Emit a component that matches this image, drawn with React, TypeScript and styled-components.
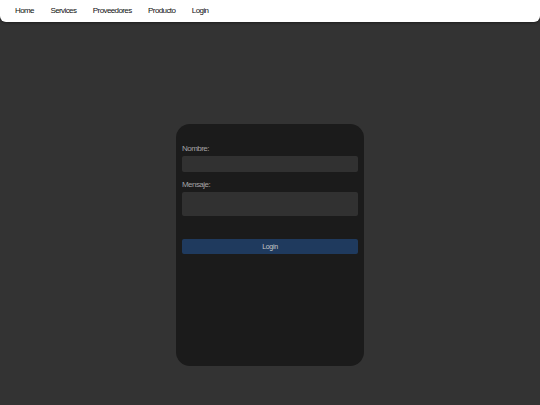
import styled, { createGlobalStyle } from 'styled-components'

const GlobalStyle = createGlobalStyle`
    html, body {
        margin: 0;
        padding: 0;
        background-color: #333333;
        font-family: "Liberation Sans", Arial, sans-serif;
    }
    * {
        box-sizing: border-box;
    }
`

const Page = styled.div`
    min-height: 405px;
    background-color: #333333;
    overflow: hidden;
`

const Nav = styled.nav`
    height: 22px;
    background-color: #ffffff;
    border-radius: 0 0 6px 6px;
    box-shadow: 0 1px 3px rgba(0, 0, 0, 0.4);
    display: flex;
    align-items: center;
    padding: 0 0 2px 15px;
    gap: 16.5px;
`

const NavLink = styled.a`
    font-size: 8px;
    letter-spacing: -0.6px;
    color: #111111;
    text-decoration: none;
    cursor: pointer;
`

const Main = styled.main`
    display: flex;
    justify-content: center;
    padding-top: 102px;
`

const Card = styled.form`
    width: 188px;
    height: 242px;
    background-color: #1b1b1b;
    border-radius: 14px;
    padding: 20px 6px 0;
    display: flex;
    flex-direction: column;
`

const Label = styled.label`
    font-size: 8px;
    letter-spacing: -0.55px;
    color: #a4a4a4;
    margin-bottom: 3px;
`

const Input = styled.input`
    height: 16px;
    width: 100%;
    border: none;
    border-radius: 2px;
    background-color: #313131;
    margin-bottom: 8px;
    outline: none;
`

const TextArea = styled.textarea`
    height: 24px;
    width: 100%;
    border: none;
    border-radius: 2px;
    background-color: #313131;
    resize: none;
    outline: none;
    margin: 0 0 23px;
    display: block;
`

const Button = styled.button`
    height: 15px;
    width: 100%;
    border: none;
    border-radius: 2px;
    background-color: #1f3a5e;
    color: #c8c8c8;
    font-family: "Liberation Sans", Arial, sans-serif;
    font-size: 7px;
    letter-spacing: -0.3px;
    padding: 0;
    cursor: pointer;
`

export default function App() {
    return (
        <Page>
            <GlobalStyle />
            <Nav>
                <NavLink>Home</NavLink>
                <NavLink>Services</NavLink>
                <NavLink>Proveedores</NavLink>
                <NavLink>Producto</NavLink>
                <NavLink>Login</NavLink>
            </Nav>
            <Main>
                <Card onSubmit={(e) => e.preventDefault()}>
                    <Label htmlFor="nombre">Nombre:</Label>
                    <Input id="nombre" type="text" />
                    <Label htmlFor="mensaje">Mensaje:</Label>
                    <TextArea id="mensaje" />
                    <Button type="submit">Login</Button>
                </Card>
            </Main>
        </Page>
    )
}
